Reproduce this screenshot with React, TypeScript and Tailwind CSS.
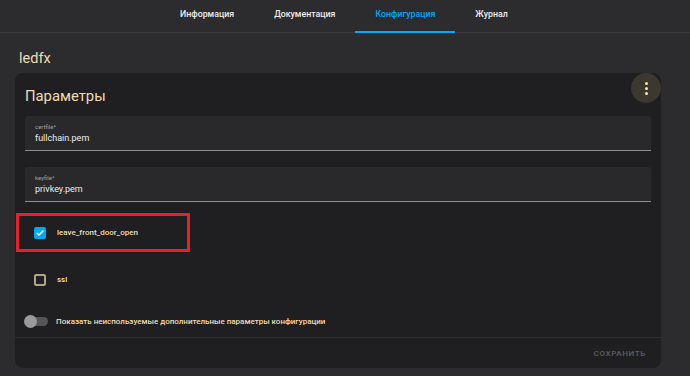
import React from "react";

const pale = "text-[#f0dcb4]";

export default function App() {
  return (
    <div className="w-[690px] h-[376px] bg-[#2c2c2e] overflow-hidden" style={{ fontFamily: "Roboto, 'Liberation Sans', sans-serif" }}>
      {/* tabs */}
      <div className="h-[33px] border-b border-[#3c3c3e] flex items-stretch pl-[160px]">
        {["Информация", "Документация", "Конфигурация", "Журнал"].map((t) => {
          const active = t === "Конфигурация";
          return (
            <div key={t} className={`relative px-[20px] flex items-center text-[8.8px] font-medium ${active ? "text-[#03a9f4]" : "text-[#ececec]"}`}>
              <span className="-mt-[2px]">{t}</span>
              {active && <div className="absolute left-0 right-0 bottom-[-1px] h-[2px] bg-[#03a9f4]" />}
            </div>
          );
        })}
      </div>
      {/* title */}
      <div className={`pl-[19px] pt-[17px] h-[40px] text-[14.5px] leading-[18px] ${pale}`}>ledfx</div>
      {/* card */}
      <div className="relative ml-[15px] w-[646px] h-[295px] bg-[#1f1f21] rounded-[8px]">
        <div className="absolute top-0 right-0 w-[30px] h-[30px] rounded-full bg-[#3b3830] flex flex-col items-center justify-center gap-[2px]">
          <div className="w-[3px] h-[3px] rounded-full bg-[#f6e4b8]" />
          <div className="w-[3px] h-[3px] rounded-full bg-[#f6e4b8]" />
          <div className="w-[3px] h-[3px] rounded-full bg-[#f6e4b8]" />
        </div>
        <div className={`pl-[10px] pt-[14px] h-[43px] text-[14.8px] leading-[18px] ${pale}`}>Параметры</div>
        <div className="px-[10px] flex flex-col gap-[16px]">
          <Field label="certfile*" value="fullchain.pem" />
          <Field label="keyfile*" value="privkey.pem" />
        </div>
        <div className="mt-[11px] ml-[1px] w-[174px] h-[39px] border-[3px] border-[#e5222b] flex items-center pl-[15px] gap-[11px]">
          <div className="w-[12px] h-[12px] rounded-[2px] bg-[#03a9f4] flex items-center justify-center">
            <svg width="10" height="10" viewBox="0 0 24 24" fill="none" stroke="white" strokeWidth="3.5" strokeLinecap="round" strokeLinejoin="round">
              <path d="M5 12.5l4.5 4.5L19 7.5" />
            </svg>
          </div>
          <span className={`text-[8px] font-medium ${pale}`}>leave_front_door_open</span>
        </div>
        <div className="mt-[22px] ml-[19px] flex items-center gap-[11px] h-[12px]">
          <div className="w-[12px] h-[12px] rounded-[2px] border-[2px] border-[#b3a488]" />
          <span className={`text-[8px] font-medium ${pale}`}>ssl</span>
        </div>
        <div className="mt-[29px] ml-[9px] flex items-center gap-[8px] h-[13px]">
          <div className="relative w-[24px] h-[13px]">
            <div className="absolute left-[2px] right-0 top-[2px] h-[9px] rounded-full bg-[#555557]" />
            <div className="absolute left-0 top-0 w-[13px] h-[13px] rounded-full bg-[#9a9a9a]" />
          </div>
          <span className={`text-[8px] font-medium ${pale}`}>Показать неиспользуемые дополнительные параметры конфигурации</span>
        </div>
        <div className="mt-[9px] h-[1px] bg-[#2f2f31]" />
        <div className="flex justify-end pr-[15px] pt-[10px]">
          <span className="text-[8px] font-medium tracking-[0.08em] text-[#5e5e60]">СОХРАНИТЬ</span>
        </div>
      </div>
    </div>
  );
}

function Field({ label, value }: { label: string; value: string }) {
  return (
    <div className="h-[35px] bg-[#29292b] rounded-t-[3px] border-b border-[#8c8c8c] pl-[10px] pt-[7px]">
      <div className="text-[6px] leading-[8px] text-[#a0a0a0]">{label}</div>
      <div className="text-[9px] leading-[12px] text-[#ececec] mt-[1px]">{value}</div>
    </div>
  );
}
